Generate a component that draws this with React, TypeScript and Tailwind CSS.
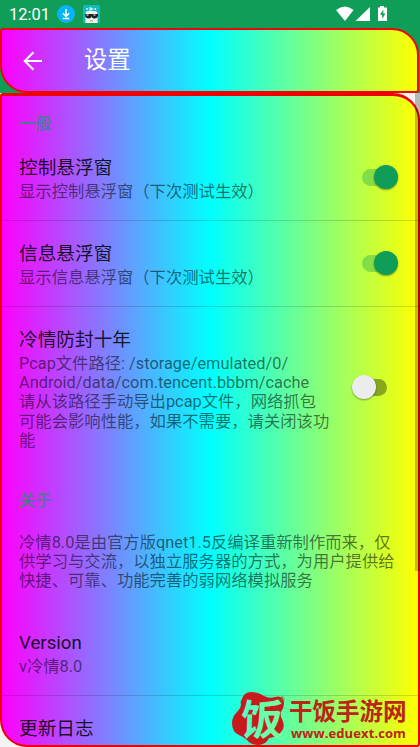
import React from "react";

const rainbow = "bg-[linear-gradient(90deg,#ff00ff_0%,#00ffff_50%,#ffff00_100%)]";

function Toggle({ on }: { on: boolean }) {
  return (
    <div className="relative h-6 w-12">
      <div
        className={
          on
            ? "absolute left-[12px] top-[4px] h-[17px] w-[29px] rounded-full bg-[#0f9d58]/35"
            : "absolute left-[4px] top-[4px] h-[17px] w-[33px] rounded-full bg-black/35"
        }
      />
      <div
        className={
          on
            ? "absolute left-[24px] top-0 size-6 rounded-full bg-[#0f9d58] shadow-[0_1px_2px_rgba(0,0,0,0.4)]"
            : "absolute left-[2px] top-0 size-6 rounded-full bg-[#ececec] shadow-[0_1px_2px_rgba(0,0,0,0.4)]"
        }
      />
    </div>
  );
}

function Title({ children }: { children: React.ReactNode }) {
  return <div className="h-[25px] text-[18.67px] leading-[23px] text-black/85">{children}</div>;
}

function Summary({ lines }: { lines: string[] }) {
  return (
    <div className="text-[16.33px] leading-[19.2px] text-black/55">
      {lines.map((line) => (
        <div key={line} className="h-[19.2px]">{line}</div>
      ))}
    </div>
  );
}

function Category({ children }: { children: React.ReactNode }) {
  return <div className="text-[16.33px] font-medium leading-5 text-[#0f9d58]/75">{children}</div>;
}

function StatusBar() {
  return (
    <div className="flex h-7 shrink-0 items-center bg-[#0f9d58] pl-[9px]">
      <span className="w-[48px] pt-px text-[16.5px] leading-7 text-white">12:01</span>
      <svg className="size-[18px]" viewBox="0 0 18 18">
        <circle cx="9" cy="9" r="9" fill="#08b4f8" />
        <path d="M9 4v7M5.8 8.2 9 11.4l3.2-3.2M5.8 13.6h6.4" fill="none" stroke="#fff" strokeWidth="1.5" />
      </svg>
      <svg className="ml-2 h-[18px] w-[17px]" viewBox="0 0 17 18">
        <rect width="17" height="18" rx="1.5" fill="#13b9bd" />
        <path d="M2.5 18V9q0-3 3-3h6q3 0 3 3v9Z" fill="#f3f3ed" />
        <path d="M3 3.8h2M6 3h2v2H6M9 3v2M10.5 4h1M12.5 3v2" stroke="#e6ffff" strokeWidth="1.2" fill="none" />
        <path d="M2 9h13v2q-1 3-4 2.5-2 0-2.5-2Q8 13.5 6 13.5q-4 0-4-4Z" fill="#222" />
        <path d="M3.5 10h2M10.5 10h2" stroke="#fff" />
        <path d="M7 16q1.5-1 3 0" fill="none" stroke="#9b9b8b" />
      </svg>
      <svg className="ml-auto mr-[33px] h-4 w-[51px]" viewBox="0 0 51 16" fill="#fff">
        <path d="M0 4Q9-3 17.5 4L9 15Z" />
        <path d="M34 1v14H19.5Z" />
        <path d="M44 0h4v1.5h3V15h-9V1.5h2Z" />
        <path d="M47.3 3.4 44 8.8h2.2v4.1l3.2-5.4h-2.1Z" fill="#0f9d58" />
      </svg>
    </div>
  );
}

function Watermark() {
  return (
    <div className="absolute left-[232px] top-[691px] flex h-[54px] w-[180px]">
      <svg className="h-[54px] w-[57px] shrink-0 overflow-visible" viewBox="0 0 57 54">
        <defs>
          <linearGradient id="glyph" gradientUnits="userSpaceOnUse" x1="8" x2="60" y1="0" y2="0">
            <stop offset="0" stopColor="#4dffc8" />
            <stop offset="1" stopColor="#86ff8c" />
          </linearGradient>
        </defs>
        <path d="M10 8Q12 1 19 1q8 0 13 4 5 3 11 1 9-2 9 6 0 5-3 9-1 4 1 7 4 8-1 13-4 5-12 6-3 7-11 7-7 0-11-5-3-3-8-5-7-3-7-12 0-6 5-11 4-4 4-8-1-2 1-5Z" fill="#c71a1d" />
        <text x="9" y="43.5" fontSize="42" fontWeight="600" fontFamily="Noto Sans CJK SC, sans-serif" fill="url(#glyph)" transform="translate(1 0) skewX(-2)">饭</text>
        <text x="48" y="11" fontSize="7" fontFamily="Liberation Sans, sans-serif" fill="#9b5b25">®</text>
      </svg>
      <div className="flex flex-col whitespace-nowrap text-[#bb2417]">
        <div className="mt-[8px] h-[27px] text-[23.5px] font-bold leading-[27px]">干饭手游网</div>
        <div className="-mt-px h-[16px] pl-[2px] font-['Open_Sans'] text-[13px] font-bold leading-[16px] tracking-[0.1px]">www.eduext.com</div>
      </div>
    </div>
  );
}

export default function App() {
  return (
    <div className="relative flex h-[747px] w-[420px] flex-col overflow-hidden bg-[#0f9d58] font-[Roboto,'Noto_Sans_CJK_SC',sans-serif]">
      <StatusBar />
      <header className={`${rainbow} flex h-[65px] w-[419px] shrink-0 items-center rounded-[3px_27px_3px_27px] border-2 border-[#ed0505] pl-[21px]`}>
        <svg className="size-[20px]" viewBox="0 0 20 20" fill="none" stroke="#fff" strokeWidth="2">
          <path d="M19 10H2M10.5 1.2 1.7 10l8.8 8.8" />
        </svg>
        <h1 className="-mt-px ml-[41px] text-[23.33px] leading-7 text-white">设置</h1>
      </header>
      <div className="h-[654px] shrink-0 bg-[#f4f4f4]">
        <main className={`${rainbow} flex h-[654px] w-[420px] flex-col overflow-hidden rounded-[3px_27px_3px_27px] border-2 border-t-3 border-[#f00000]`}>
          <div className="h-[39px] shrink-0 pl-[17px] pt-[18px]"><Category>一般</Category></div>
          <section className="flex h-[86px] shrink-0 border-b border-black/15 pl-[17px] pt-[22px]">
            <div className="w-[338px]"><Title>控制悬浮窗</Title><Summary lines={["显示控制悬浮窗（下次测试生效）"]} /></div>
            <div className="-ml-[7px] mt-[8px]"><Toggle on /></div>
          </section>
          <section className="flex h-[86px] shrink-0 border-b border-black/15 pl-[17px] pt-[22px]">
            <div className="w-[338px]"><Title>信息悬浮窗</Title><Summary lines={["显示信息悬浮窗（下次测试生效）"]} /></div>
            <div className="-ml-[7px] mt-[8px]"><Toggle on /></div>
          </section>
          <section className="flex h-[164px] shrink-0 pl-[17px] pt-[22px]">
            <div className="w-[338px]">
              <Title>冷情防封十年</Title>
              <Summary lines={["Pcap文件路径: /storage/emulated/0/", "Android/data/com.tencent.bbbm/cache", "请从该路径手动导出pcap文件，网络抓包", "可能会影响性能，如果不需要，请关闭该功", "能"]} />
            </div>
            <div className="-ml-[7px] mt-[46px]"><Toggle on={false} /></div>
          </section>
          <div className="h-[38px] shrink-0 pl-[17px] pt-[20px]"><Category>关于</Category></div>
          <section className="h-[101px] shrink-0 whitespace-nowrap pl-[17px] pt-[24px]">
            <Summary lines={["冷情8.0是由官方版qnet1.5反编译重新制作而来，仅", "供学习与交流，以独立服务器的方式，为用户提供给", "快捷、可靠、功能完善的弱网络模拟服务"]} />
          </section>
          <section className="h-[86px] shrink-0 border-b border-black/15 pl-[17px] pt-[22px]">
            <Title>Version</Title>
            <Summary lines={["v冷情8.0"]} />
          </section>
          <section className="h-[50px] shrink-0 pl-[17px] pt-[22px]"><Title>更新日志</Title></section>
        </main>
      </div>
      <div className="absolute left-[415px] top-[93px] h-[478px] w-[5px] bg-black/25" />
      <Watermark />
    </div>
  );
}
